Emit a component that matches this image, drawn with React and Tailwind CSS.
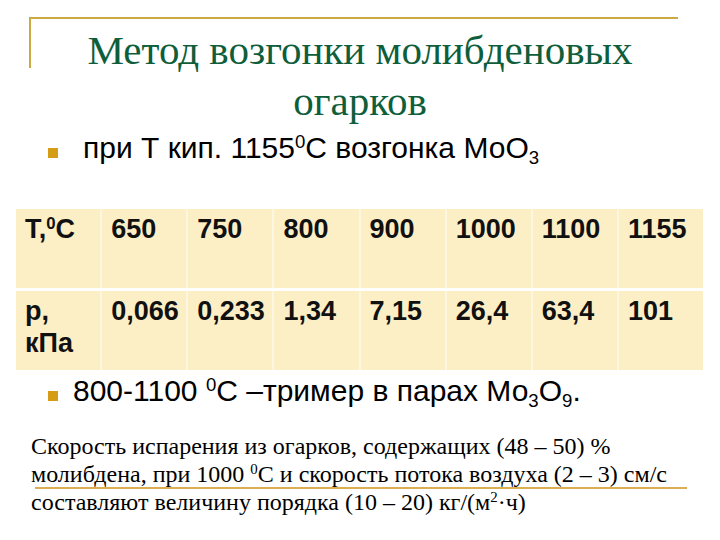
import React from 'react';

const tempRow = ["650", "750", "800", "900", "1000", "1100", "1155"];
const pressRow = ["0,066", "0,233", "1,34", "7,15", "26,4", "63,4", "101"];

const Sup = ({ children }) => <span className="text-[0.62em] leading-[0] align-[0.55em]">{children}</span>;

const Sub = ({ children }) => <span className="text-[0.62em] leading-[0] align-[-0.3em]">{children}</span>;

const Bullet = ({ children, gap }) => (
    <div className="flex items-start pl-[48px] text-[30px] leading-[36px] text-black">
        <div className="w-[10px] h-[10px] mt-[18px] bg-[#d59c16] shrink-0" />
        <div className={gap}>{children}</div>
    </div>
);

const Cell = ({ children }) => (
    <div className="bg-[#fdefc5] pl-[9px] pt-[4px] text-[27px] leading-[32px] font-bold text-[#111]">
        {children}
    </div>
);

const App = () => {
    return (
        <div className="w-[720px] h-[540px] bg-white overflow-hidden font-['Liberation_Sans',Arial,sans-serif]">
            {/* title with the slide's corner frame */}
            <div className="flex items-start ml-[29px] mt-[17px] w-[649px] border-t-2 border-[#c9ab42]">
                <div className="w-[2px] h-[49px] bg-[#c9ab42] shrink-0" />
                <div className="flex-1 pl-[11px] pt-[6px] text-center font-['Liberation_Serif','Times_New_Roman',serif] text-[41px] leading-[51px] text-[#0e5e3b]">
                    <div>Метод возгонки молибденовых</div>
                    <div>огарков</div>
                </div>
            </div>

            <div className="mt-[3px]">
                <Bullet gap="ml-[25px]">
                    при Т кип. 1155<Sup>0</Sup>С возгонка МоО<Sub>3</Sub>
                </Bullet>
            </div>

            <div className="ml-[16px] w-[687px] mt-[43px] flex flex-col gap-[3px]">
                <div className="grid grid-cols-8 gap-x-[2px] bg-[#fdf6e0] h-[79px]">
                    <Cell>
                        Т,<Sup>0</Sup>С
                    </Cell>
                    {tempRow.map((t) => (
                        <Cell key={t}>{t}</Cell>
                    ))}
                </div>
                <div className="grid grid-cols-8 gap-x-[2px] bg-[#fdf6e0] h-[79px]">
                    <Cell>
                        р,
                        <br />
                        кПа
                    </Cell>
                    {pressRow.map((p) => (
                        <Cell key={p}>{p}</Cell>
                    ))}
                </div>
            </div>

            <div className="mt-[3px]">
                <Bullet gap="ml-[15px]">
                    800-1100 <Sup>0</Sup>С –тример в парах Мо<Sub>3</Sub>О<Sub>9</Sub>.
                </Bullet>
            </div>

            <div className="mt-[24px] pl-[31px] font-['Liberation_Serif','Times_New_Roman',serif] text-[24px] leading-[27.5px] text-black">
                <div>Скорость испарения из огарков, содержащих (48 – 50) %</div>
                <div className="ml-[4px] -indent-[4px] w-[652px] h-[26px] border-b-2 border-[#dcae52] box-content">
                    молибдена, при 1000 <Sup>0</Sup>С и скорость потока воздуха (2 – 3) см/с
                </div>
                <div>
                    составляют величину порядка (10 – 20) кг/(м<Sup>2</Sup>·ч)
                </div>
            </div>
        </div>
    );
};

export default App;
